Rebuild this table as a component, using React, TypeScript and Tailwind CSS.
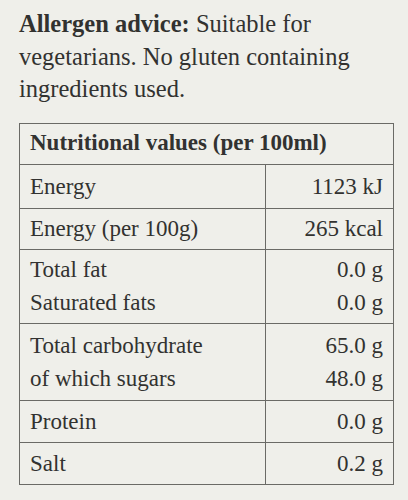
const rows: { labels: string[]; values: string[]; h: string }[] = [
  { labels: ["Energy"], values: ["1123 kJ"], h: "h-[44px]" },
  { labels: ["Energy (per 100g)"], values: ["265 kcal"], h: "h-[41px]" },
  { labels: ["Total fat", "Saturated fats"], values: ["0.0 g", "0.0 g"], h: "h-[74px]" },
  { labels: ["Total carbohydrate", "of which sugars"], values: ["65.0 g", "48.0 g"], h: "h-[77px]" },
  { labels: ["Protein"], values: ["0.0 g"], h: "h-[42px]" },
  { labels: ["Salt"], values: ["0.2 g"], h: "h-[41px]" },
];

export default function App() {
  return (
    <div className="w-[408px] h-[500px] bg-[#efefea] text-[#323230] font-[family-name:'Liberation_Serif',serif] overflow-hidden">
      <p className="pl-[19px] pr-3 pt-[8px] text-[24.5px] leading-[32.5px]">
        <span className="font-bold">Allergen advice:</span> Suitable for vegetarians. No gluten containing
        ingredients used.
      </p>

      <div className="ml-[19px] mt-[17px] w-[375px] border-[1.5px] border-[#6a6a66] text-[23px]">
        <div className="h-[41px] flex items-center px-[10px] font-bold border-b-[1.5px] border-[#6a6a66]">
          Nutritional values (per 100ml)
        </div>
        {rows.map((r, i) => (
          <div
            key={i}
            className={`grid grid-cols-[246px_1fr] ${r.h} ${i < rows.length - 1 ? "border-b-[1.5px] border-[#6a6a66]" : ""}`}
          >
            <div className="flex flex-col justify-center px-[10px] border-r-[1.5px] border-[#6a6a66] leading-[33px]">
              {r.labels.map((l) => (
                <span key={l}>{l}</span>
              ))}
            </div>
            <div className="flex flex-col justify-center items-end pr-[10px] leading-[33px]">
              {r.values.map((v, j) => (
                <span key={j}>{v}</span>
              ))}
            </div>
          </div>
        ))}
      </div>
    </div>
  );
}
